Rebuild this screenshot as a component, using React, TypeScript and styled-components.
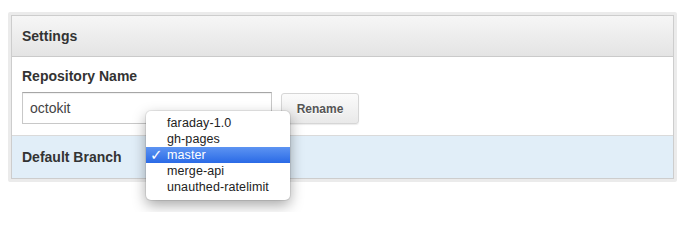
import React from "react";
import styled, { createGlobalStyle } from "styled-components";

const GlobalStyle = createGlobalStyle`
    html, body {
        margin: 0;
        padding: 0;
        background: #ffffff;
    }
    body {
        font-family: "Liberation Sans", Arial, sans-serif;
        color: #333333;
    }
`;

const Page = styled.div`
    padding: 12px 9px 0 8px;
    min-height: 212px;
    box-sizing: border-box;
    position: relative;
`;

const Frame = styled.div`
    border: 3px solid #ebebeb;
    border-radius: 2px;
`;

const Panel = styled.div`
    border: 1px solid #cdcdcd;
`;

const Header = styled.div`
    height: 40px;
    display: flex;
    align-items: center;
    padding: 0 10px;
    background: linear-gradient(#f6f6f6, #e4e4e4);
    border-bottom: 1px solid #cacaca;
    font-size: 14px;
    font-weight: bold;
    color: #333;
`;

const Section = styled.div<{ $tint?: boolean }>`
    padding: ${(p) => (p.$tint ? "0 10px" : "10px 10px 11px")};
    background: ${(p) => (p.$tint ? "#e1eef8" : "#ffffff")};
    border-top: ${(p) => (p.$tint ? "1px solid #dadada" : "none")};
    height: ${(p) => (p.$tint ? "42px" : "auto")};
    display: flex;
    flex-direction: ${(p) => (p.$tint ? "row" : "column")};
    align-items: ${(p) => (p.$tint ? "center" : "flex-start")};
`;

const Label = styled.div`
    font-size: 14px;
    font-weight: bold;
    color: #333;
    line-height: 18px;
`;

const Row = styled.div`
    display: flex;
    align-items: flex-start;
    gap: 9px;
    margin-top: 7px;
`;

const TextInput = styled.div`
    width: 234px;
    height: 30px;
    box-sizing: content-box;
    border: 1px solid #c8c8c8;
    border-top-color: #a6a6a6;
    box-shadow: inset 0 1px 1px rgba(0, 0, 0, 0.06);
    display: flex;
    align-items: center;
    padding: 0 7px;
    font-size: 14px;
    color: #444;
`;

const Button = styled.div`
    margin-top: 1px;
    width: 76px;
    height: 29px;
    border: 1px solid #d6d6d6;
    border-radius: 3px;
    background: linear-gradient(#fbfbfb, #e9e9e9);
    box-shadow: 0 1px 1px rgba(0, 0, 0, 0.08);
    display: flex;
    align-items: center;
    justify-content: center;
    font-size: 12px;
    font-weight: bold;
    color: #555;
    text-shadow: 0 1px 0 #fff;
`;

const Menu = styled.div`
    position: absolute;
    z-index: 2;
    left: 146px;
    top: 111px;
    width: 144px;
    padding: 4px 0 5px;
    background: #ffffff;
    border-radius: 5px;
    box-shadow: 0 0 0 1px rgba(0, 0, 0, 0.08), 0 5px 14px rgba(0, 0, 0, 0.35);
`;

const Item = styled.div<{ $active?: boolean }>`
    height: 16px;
    line-height: 16px;
    padding-left: 21px;
    position: relative;
    font-size: 12.5px;
    letter-spacing: 0.1px;
    color: ${(p) => (p.$active ? "#ffffff" : "#222")};
    background: ${(p) => (p.$active ? "linear-gradient(#5d94f2, #2a6ae6)" : "transparent")};
`;

const Check = styled.span`
    position: absolute;
    left: 4px;
    top: 0;
    font-family: "DejaVu Sans", sans-serif;
    font-size: 15px;
    font-weight: bold;
`;

const branches = ["faraday-1.0", "gh-pages", "master", "merge-api", "unauthed-ratelimit"];

const App: React.FC = () => {
    const current = "master";
    return (
        <Page>
            <GlobalStyle />
            <Frame>
                <Panel>
                    <Header>Settings</Header>
                    <Section>
                        <Label>Repository Name</Label>
                        <Row>
                            <TextInput>octokit</TextInput>
                            <Button>Rename</Button>
                        </Row>
                    </Section>
                    <Section $tint>
                        <Label>Default Branch</Label>
                    </Section>
                </Panel>
            </Frame>
            <Menu>
                {branches.map((b) => (
                    <Item key={b} $active={b === current}>
                        {b === current ? <Check>✓</Check> : null}
                        {b}
                    </Item>
                ))}
            </Menu>
        </Page>
    );
};

export default App;
